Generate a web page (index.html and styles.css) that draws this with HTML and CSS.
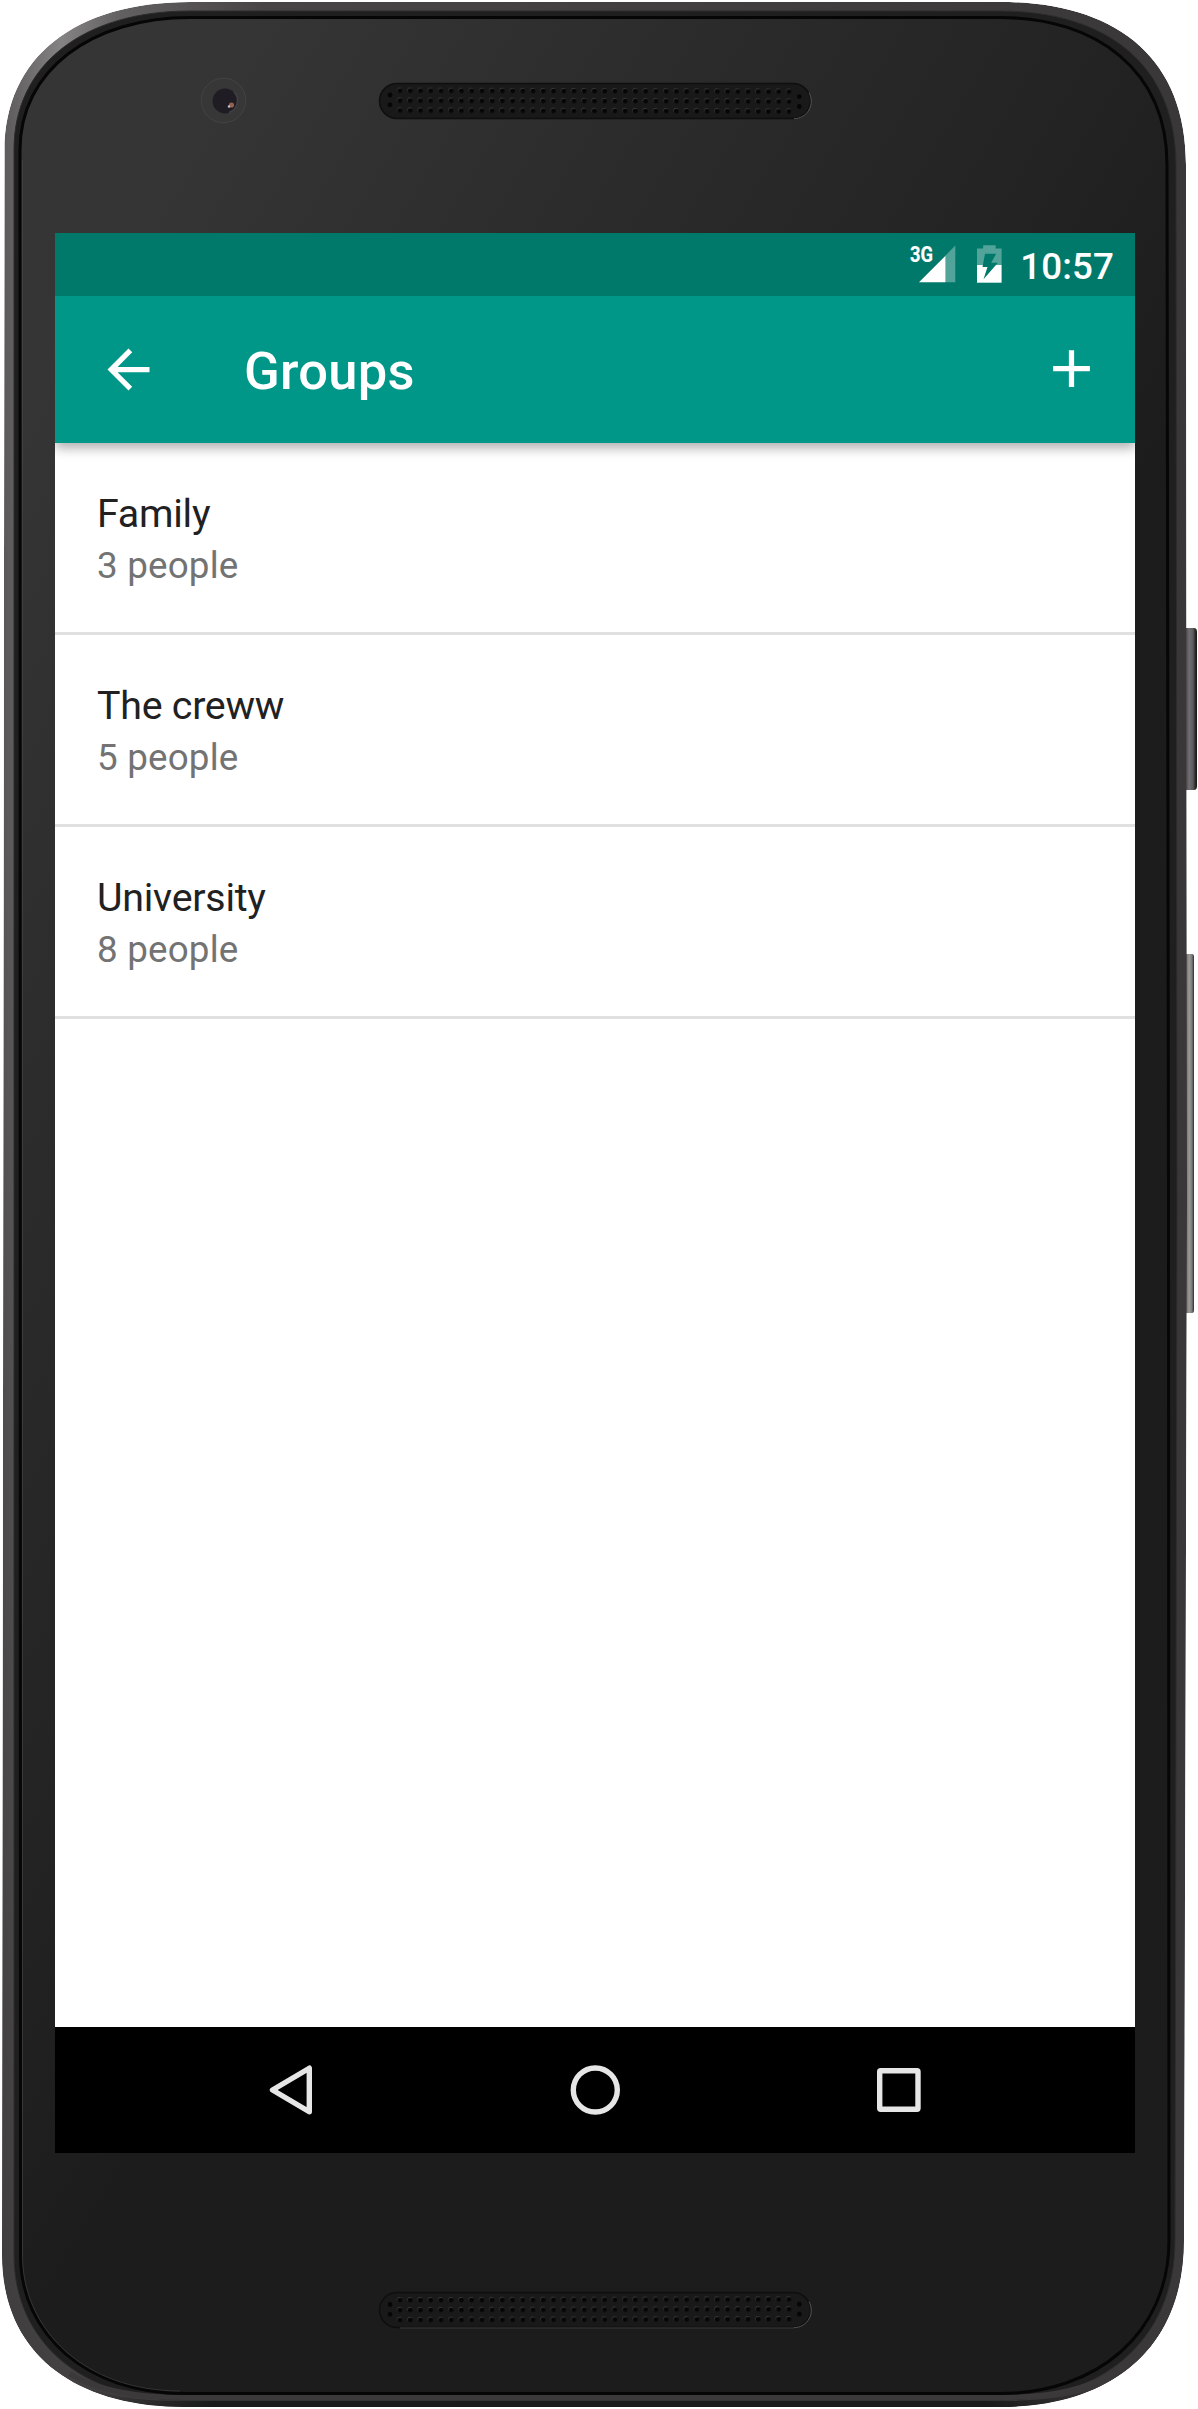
FILE: index.html
```html
<!DOCTYPE html>
<html lang="en">
<head>
<meta charset="utf-8">
<title>Groups</title>
<link rel="stylesheet" href="styles.css">
</head>
<body>
<div class="device">
  <svg class="device-frame" viewBox="0 0 1198 2409" aria-hidden="true">
    <defs>
      <linearGradient id="rim" x1="0" y1="0" x2="1" y2="0">
        <stop offset="0" stop-color="#5c5a5b"/>
        <stop offset=".05" stop-color="#858384"/>
        <stop offset=".1" stop-color="#626061"/>
        <stop offset=".22" stop-color="#474546"/>
        <stop offset="1" stop-color="#393738"/>
      </linearGradient>
      <linearGradient id="rim-shade" x1="0" y1="0" x2="0" y2="1">
        <stop offset="0" stop-color="#3a3839" stop-opacity="0"/>
        <stop offset=".35" stop-color="#3a3839" stop-opacity=".15"/>
        <stop offset="1" stop-color="#3a3839" stop-opacity=".9"/>
      </linearGradient>
      <linearGradient id="face" gradientUnits="userSpaceOnUse" x1="200" y1="100" x2="1060" y2="616">
        <stop offset="0" stop-color="#353536"/>
        <stop offset=".4" stop-color="#2b2b2c"/>
        <stop offset=".75" stop-color="#232324"/>
        <stop offset="1" stop-color="#1c1c1c"/>
      </linearGradient>
      <linearGradient id="power" x1="0" y1="0" x2="1" y2="0">
        <stop offset="0" stop-color="#4f4d4f"/>
        <stop offset=".3" stop-color="#706e71"/>
        <stop offset=".65" stop-color="#5c5a5c"/>
        <stop offset=".8" stop-color="#333"/>
        <stop offset="1" stop-color="#151515"/>
      </linearGradient>
      <linearGradient id="volume" x1="0" y1="0" x2="1" y2="0">
        <stop offset="0" stop-color="#6d6b6c"/>
        <stop offset=".4" stop-color="#9b999a"/>
        <stop offset=".75" stop-color="#7a7879"/>
        <stop offset="1" stop-color="#2b2a2a"/>
      </linearGradient>
      <linearGradient id="bottom-shade" gradientUnits="userSpaceOnUse" x1="90" y1="0" x2="1110" y2="0">
        <stop offset="0" stop-color="#1b1a1b" stop-opacity="0"/>
        <stop offset=".12" stop-color="#1b1a1b"/>
        <stop offset=".88" stop-color="#1b1a1b"/>
        <stop offset="1" stop-color="#1b1a1b" stop-opacity="0"/>
      </linearGradient>
      <path id="outline" d="M190 2H1000C1112 2 1186 54 1186 165L1187 1200L1184 2240C1184 2350 1110 2407 1000 2407H185C70 2407 2 2350 2 2255L4.500 150C5 57 75 2 190 2Z"/>
      <clipPath id="body-clip"><use href="#outline"/></clipPath>
      <pattern id="mesh" patternUnits="userSpaceOnUse" x="394.9" y="85.6" width="10.235" height="9.9">
        <circle cx="4.7" cy="4.4" r="2.4" fill="#3d3d3d"/>
        <circle cx="5.1" cy="5" r="2.4" fill="#060606"/>
      </pattern>
      <g id="slot">
        <rect x="379.5" y="83.5" width="431" height="35" rx="17.5" fill="#191919" stroke="#0f0f0f" stroke-width="1.5"/>
        <path d="M794 118.700a17.400 17.400 0 0 0 15-26" fill="none" stroke="#555" stroke-width="1"/>
      </g>
      <g id="holes">
        <rect x="394.9" y="85.6" width="399.16" height="29.7" fill="url(#mesh)"/>
        <g fill="#060606">
          <circle cx="390" cy="95" r="2.4"/><circle cx="390" cy="104.8" r="2.4"/>
          <circle cx="799.3" cy="95.6" r="2.4"/><circle cx="799.3" cy="105.5" r="2.4"/>
        </g>
      </g>
    </defs>

    <path d="M1186 628h8q3 0 3 4v154q0 4-3 4h-8z" fill="url(#power)"/>
    <path d="M1186 954h6q2 0 2 3v353q0 3-2 3h-6z" fill="url(#volume)"/>

    <g id="body" clip-path="url(#body-clip)">
      <use href="#outline" fill="url(#rim)"/>
      <use href="#outline" fill="url(#rim-shade)"/>
      <path d="M190 11H1000C1106 11 1176 64 1176 165L1177 1200L1175 2240C1175 2342 1100 2400 1000 2400H185C80 2400 14 2340 14 2255L14 150C14 64 84 11 190 11Z" fill="#1f1f1f" stroke="#2e2d2e" stroke-width="1"/>
      <path d="M70 2374C100 2392 140 2397.500 185 2397.500H1000C1050 2397.500 1090 2390 1125 2366" fill="none" stroke="#3b393a" stroke-width="5"/>
      <path d="M90 2392C120 2402 150 2404 185 2404H1000C1040 2404 1080 2400 1110 2386" fill="none" stroke="url(#bottom-shade)" stroke-width="6"/>
      <path d="M190 17.500H1000C1096 17.500 1167 70 1167 165L1168.500 1200L1169 2240C1169 2334 1096 2393.500 1000 2393.500H185C86 2393.500 20.500 2334 20.500 2255L20 150C20 70 92 17.500 190 17.500Z" fill="url(#face)" stroke="#060606" stroke-width="3"/>
      <path d="M22.500 160V2255C22.500 2330 85 2391 180 2391" fill="none" stroke="#4a4a4b" stroke-opacity=".55" stroke-width="1"/>
    </g>

    <g id="camera">
      <circle cx="223.500" cy="100.500" r="22.300" fill="#373738" stroke="#434344" stroke-width="1"/>
      <circle cx="225" cy="101" r="12.500" fill="#1f1c24"/>
      <path d="M234 92a12.500 12.500 0 0 1-5 20.500" fill="none" stroke="#434046" stroke-width="1.500"/>
      <circle cx="231.500" cy="105" r="2.600" fill="#96604f"/>
      <circle cx="229" cy="106.500" r="1.200" fill="#c9c3cc"/>
    </g>
    <use href="#slot"/>
    <use href="#holes" transform="rotate(.14 400 100)"/>
    <use href="#slot" y="2209"/>
    <path d="M400 2328H794" stroke="#3c3d3d" stroke-width="1"/>
    <use href="#holes" transform="translate(0 2209.500) rotate(-.12 400 100)"/>
  </svg>

  <main class="screen">
    <header class="status-bar">
      <svg class="signal" viewBox="0 0 46 38" aria-label="3G signal">
        <text class="network" x="0" y="16.500" textLength="23" lengthAdjust="spacingAndGlyphs">3G</text>
        <path d="M35.500 10.400L45.300 .6V37.200H35.500z" fill="#fff" fill-opacity=".32"/>
        <path d="M9 37.200L35.500 10.700V37.200z" fill="#fff"/>
      </svg>
      <svg class="battery" viewBox="0 0 24.600 38" aria-label="Charging">
        <path d="M0 3.400H6.200V.2H18.600V3.400H24.600V20H0z" fill="#fff" fill-opacity=".32"/>
        <path d="M0 20H24.600V37.700H0z" fill="#fff"/>
        <path d="M8 8.700H19.200L14.200 17.700H20.900L6.500 34.300L10.500 22H5.500z" fill="#00796b"/>
      </svg>
      <time class="clock">10:57</time>
    </header>
    <div class="toolbar">
      <svg class="icon" viewBox="0 0 24 24" aria-label="Back"><path d="M20 11H7.830l5.590-5.590L12 4l-8 8 8 8 1.410-1.410L7.830 13H20v-2z"/></svg>
      <h1 class="title">Groups</h1>
      <svg class="icon icon-add" viewBox="0 0 24 24" aria-label="Add group"><path d="M19 13h-6v6h-2v-6H5v-2h6V5h2v6h6v2z"/></svg>
    </div>
    <ul class="groups">
      <li class="group"><span class="name">Family</span><span class="count">3 people</span></li>
      <li class="group"><span class="name">The creww</span><span class="count">5 people</span></li>
      <li class="group"><span class="name">University</span><span class="count">8 people</span></li>
    </ul>
    <nav class="nav-bar">
      <svg class="nav-icon" viewBox="0 0 60 60" aria-label="Back"><path d="M11.500 30L48.300 8.200V51.800z"/></svg>
      <svg class="nav-icon" viewBox="0 0 60 60" aria-label="Home"><circle cx="30.300" cy="30" r="22"/></svg>
      <svg class="nav-icon" viewBox="0 0 60 60" aria-label="Recents"><rect x="10.700" y="10.700" width="38.300" height="38.600" rx="1"/></svg>
    </nav>
  </main>
</div>
</body>
</html>
```

FILE: styles.css
```css
* {
  box-sizing: border-box;
}

body {
  margin: 0;
  background: #fff;
  font-family: Roboto, "Liberation Sans", sans-serif;
}

.device {
  position: relative;
  width: 1198px;
  height: 2409px;
  padding: 233px 63px 256px 55px;
  overflow: hidden;
}

.device-frame {
  position: absolute;
  inset: 0;
  width: 1198px;
  height: 2409px;
}

.screen {
  position: relative;
  display: flex;
  flex-direction: column;
  width: 1080px;
  height: 1920px;
  background: #fff;
  overflow: hidden;
}

.status-bar {
  display: flex;
  flex: none;
  align-items: flex-start;
  justify-content: flex-end;
  height: 63px;
  padding: 12px 21px 0 0;
  background: #00796b;
  color: #fff;
  z-index: 2;
}

.signal {
  width: 46px;
  height: 38px;
  margin-right: 21px;
  overflow: visible;
}

.network {
  font-size: 22px;
  font-weight: 700;
  fill: #fff;
  stroke: #fff;
  stroke-width: .2px;
}

.battery {
  width: 24.6px;
  height: 38px;
  margin-right: 18.5px;
}

.clock {
  font-size: 36.75px;
  font-weight: 500;
  line-height: 43px;
  letter-spacing: .1px;
}

.toolbar {
  display: flex;
  flex: none;
  align-items: center;
  height: 147px;
  padding: 0 32px 0 42px;
  background: #009688;
  box-shadow: 0 5px 11px rgba(0, 0, 0, .32);
  color: #fff;
  z-index: 1;
}

.icon {
  width: 63px;
  height: 63px;
  fill: #fff;
}

.icon-add {
  margin-bottom: 2px;
}

.title {
  flex: 1;
  margin: 2px 0 0 84px;
  font-size: 52.5px;
  font-weight: 500;
  line-height: 62px;
  letter-spacing: .25px;
}

.groups {
  flex: 1;
  margin: 0;
  padding: 0;
  list-style: none;
}

.group {
  display: flex;
  flex-direction: column;
  gap: 7px;
  height: 192px;
  padding: 48px 42px 0;
  border-bottom: 3px solid #e0e0e0;
}

.name {
  color: #212121;
  font-size: 39.375px;
  line-height: 46px;
  letter-spacing: -.25px;
}

.count {
  color: #737373;
  font-size: 36.75px;
  line-height: 44px;
  letter-spacing: .2px;
}

.nav-bar {
  display: flex;
  flex: none;
  align-items: center;
  justify-content: center;
  gap: 244px;
  height: 126px;
  background: #000;
}

.nav-icon {
  width: 60px;
  height: 60px;
  fill: none;
  stroke: #e6e6e6;
  stroke-width: 5.4px;
  stroke-linejoin: round;
}
```
